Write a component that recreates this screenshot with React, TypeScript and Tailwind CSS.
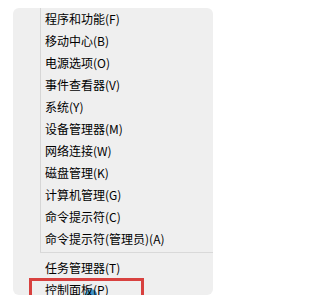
const topItems = [
  '程序和功能(F)',
  '移动中心(B)',
  '电源选项(O)',
  '事件查看器(V)',
  '系统(Y)',
  '设备管理器(M)',
  '网络连接(W)',
  '磁盘管理(K)',
  '计算机管理(G)',
  '命令提示符(C)',
  '命令提示符(管理员)(A)',
];

const bottomItems = ['任务管理器(T)', '控制面板(P)'];

export default function App() {
  return (
    <div
      className="h-[303px] w-[227px] bg-white pl-[13px] pt-[8px] text-[12px] text-black"
      style={{ fontFamily: '"Noto Sans CJK SC", "Liberation Sans", sans-serif' }}
    >
      <div className="relative h-[287px] w-[200px] overflow-hidden rounded-[6px] bg-[#efefef]">
        <div className="ml-[27px] border-l border-[#d6d6d6] pb-[2px]">
          {topItems.map((item) => (
            <div key={item} className="flex h-[22px] items-center pl-[4px] leading-none">
              {item}
            </div>
          ))}
        </div>
        <div className="ml-[27px] h-px bg-[#d9d9d9]" />
        <div className="pt-[4px]">
          {bottomItems.map((item) => (
            <div key={item} className="relative z-10 flex h-[22px] items-center pl-[32px] leading-none">
              {item}
            </div>
          ))}
        </div>

        {/* cursor blob behind the last item */}
        <div className="absolute left-[72px] top-[281px] h-[12px] w-[12px] rounded-full bg-gradient-to-br from-[#5fb4d8] to-[#1f6fae]" />

        {/* red highlight box */}
        <div className="absolute left-[16px] top-[270px] z-20 h-[30px] w-[115px] border-[3px] border-[#d8413f]" />
      </div>
    </div>
  );
}
